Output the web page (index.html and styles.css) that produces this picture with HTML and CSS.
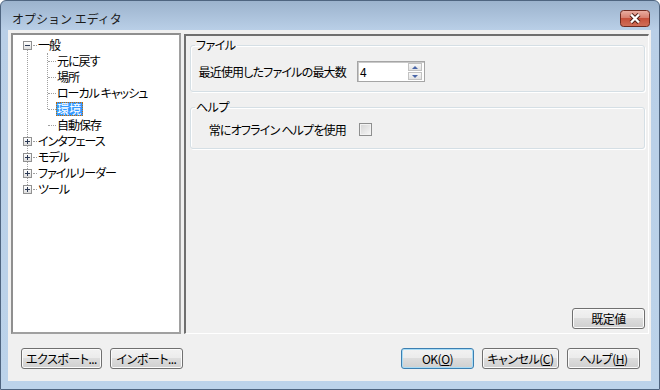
FILE: index.html
```html
<!DOCTYPE html>
<html>
<head>
    <title>オプション エディタ</title>
    <link rel="stylesheet" href="styles.css">
</head>
<body>
    <div class="window">
        <div class="titlebar">
            <span class="title">オプション エディタ</span>
            <button class="close" type="button">
                <svg width="30" height="17" viewBox="0 0 30 17">
                    <defs>
                        <linearGradient id="closeFill" x1="0" y1="0" x2="0" y2="1">
                            <stop offset="0" stop-color="#eab0a4"/>
                            <stop offset="0.45" stop-color="#d88070"/>
                            <stop offset="0.5" stop-color="#c6503b"/>
                            <stop offset="1" stop-color="#d0705a"/>
                        </linearGradient>
                    </defs>
                    <rect x="0.5" y="0.5" width="29" height="16" rx="3" fill="url(#closeFill)" stroke="#6e2b21"/>
                    <path d="M11 4.5 L19 12.5 M19 4.5 L11 12.5" stroke="#4b1d16" stroke-width="4.2"/>
                    <path d="M11 4.5 L19 12.5 M19 4.5 L11 12.5" stroke="#ffffff" stroke-width="2.4"/>
                </svg>
            </button>
        </div>

        <div class="client">
            <div class="main">
                <div class="tree">
                    <ul class="nodes">
                        <li>
                            <div class="row"><span class="toggle open"></span><span class="dots"></span><span class="label">一般</span></div>
                            <ul class="children">
                                <li class="row"><span class="dots long"></span><span class="label">元に戻す</span></li>
                                <li class="row"><span class="dots long"></span><span class="label">場所</span></li>
                                <li class="row"><span class="dots long"></span><span class="label">ローカル キャッシュ</span></li>
                                <li class="row"><span class="dots long"></span><span class="label selected">環境</span></li>
                                <li class="row"><span class="dots long"></span><span class="label">自動保存</span></li>
                            </ul>
                        </li>
                        <li class="row"><span class="toggle"></span><span class="dots"></span><span class="label">インタフェース</span></li>
                        <li class="row"><span class="toggle"></span><span class="dots"></span><span class="label">モデル</span></li>
                        <li class="row"><span class="toggle"></span><span class="dots"></span><span class="label">ファイルリーダー</span></li>
                        <li class="row"><span class="toggle"></span><span class="dots"></span><span class="label">ツール</span></li>
                    </ul>
                </div>

                <div class="panel">
                    <fieldset class="group">
                        <legend>ファイル</legend>
                        <div class="field">
                            <span class="field-label">最近使用したファイルの最大数</span>
                            <div class="spin">
                                <span class="spin-value">4</span>
                                <span class="spin-btns">
                                    <span class="spin-btn"><span class="arrow up"></span></span>
                                    <span class="spin-btn"><span class="arrow down"></span></span>
                                </span>
                            </div>
                        </div>
                    </fieldset>

                    <fieldset class="group second">
                        <legend>ヘルプ</legend>
                        <div class="field">
                            <span class="field-label">常にオフライン ヘルプを使用</span>
                            <span class="check"></span>
                        </div>
                    </fieldset>

                    <div class="panel-foot">
                        <button class="btn" type="button">既定値</button>
                    </div>
                </div>
            </div>

            <div class="footer">
                <button class="btn export" type="button">エクスポート...</button>
                <button class="btn" type="button">インポート...</button>
                <div class="footer-right">
                    <button class="btn default" type="button">OK(<u>O</u>)</button>
                    <button class="btn cancel" type="button">キャンセル(<u>C</u>)</button>
                    <button class="btn" type="button">ヘルプ(<u>H</u>)</button>
                </div>
            </div>
        </div>
    </div>
</body>
</html>
```

FILE: styles.css
```css
* {
    box-sizing: border-box;
}
body {
    margin: 0;
    font-family: "Noto Sans CJK JP", "Noto Sans CJK SC", sans-serif;
    font-size: 12px;
    font-feature-settings: "palt";
    color: #000;
}
.window {
    width: 660px;
    height: 390px;
    border: 1px solid #4f6580;
    border-radius: 6px 6px 0 0;
    background: linear-gradient(#9cb3cd, #b9cfe7 29px, #bcd3ea);
    padding: 0 8px 8px 7px;
    display: flex;
    flex-direction: column;
}
.titlebar {
    height: 29px;
    display: flex;
    align-items: flex-start;
    justify-content: space-between;
}
.title {
    margin: 10px 0 0 4px;
    line-height: 15px;
    color: #1b1b1b;
    font-feature-settings: normal;
}
.close {
    display: block;
    width: 30px;
    height: 17px;
    margin: 9px 1px 0 0;
    padding: 0;
    border: 0;
    background: none;
}
.close svg {
    display: block;
}

/* client area */
.client {
    height: 351px;
    background: #f0f0f0;
    display: flex;
    flex-direction: column;
    padding: 3px 2px 0 3px;
}
.main {
    display: flex;
    gap: 3px;
    height: 301px;
}

/* tree */
.tree {
    width: 170px;
    background: #fff;
    border: 2px solid #8f8f8f;
    border-right-color: #a0a0a0;
    border-bottom-color: #a0a0a0;
    padding-top: 2px;
    position: relative;
}
.tree::before {
    content: "";
    position: absolute;
    left: 14px;
    top: 10px;
    height: 144px;
    border-left: 1px dotted #a0a0a0;
}
.tree ul {
    list-style: none;
    margin: 0;
    padding: 0;
}
.children {
    position: relative;
}
.children::before {
    content: "";
    position: absolute;
    left: 34px;
    top: 0;
    height: 56px;
    border-left: 1px dotted #a0a0a0;
}
.row {
    height: 16px;
    display: flex;
    align-items: center;
    white-space: nowrap;
}
.toggle {
    position: relative;
    width: 9px;
    height: 9px;
    margin-left: 10px;
    border: 1px solid #919191;
    background:
        linear-gradient(#2c3a55, #2c3a55) center / 5px 1px no-repeat,
        linear-gradient(#2c3a55, #2c3a55) center / 1px 5px no-repeat,
        linear-gradient(#fff, #dedede);
}
.toggle.open {
    background:
        linear-gradient(#2c3a55, #2c3a55) center / 5px 1px no-repeat,
        linear-gradient(#fff, #dedede);
}
.dots {
    width: 4px;
    margin-left: 1px;
    border-top: 1px dotted #a0a0a0;
}
.dots.long {
    width: 8px;
    margin-left: 35px;
}
.label {
    line-height: 14px;
    padding: 0 2px 0 1px;
    letter-spacing: -1px;
}
.label.selected {
    background: #3399ff;
    color: #fff;
    outline: 1px dotted #c66a00;
    outline-offset: -1px;
    letter-spacing: 0;
}

/* right panel */
.panel {
    flex: 1;
    margin-top: 1px;
    border-style: solid;
    border-width: 2px 1px 1px 2px;
    border-color: #6f6f6f #fff #fff #6f6f6f;
    padding: 0 3px 4px 4px;
    display: flex;
    flex-direction: column;
}
.group {
    margin: 2px 0 0;
    padding: 9px 0;
    min-width: 0;
    border: 1px solid #d5dfe5;
    border-radius: 3px;
    box-shadow: 1px 1px 0 #fff, inset 1px 1px 0 #fff;
}
.group legend {
    margin-left: 4px;
    padding: 0 1px;
    line-height: 14px;
    letter-spacing: -0.5px;
}
.group.second {
    margin-top: 8px;
    padding: 5px 0 8px;
}
.field {
    display: flex;
    align-items: center;
    height: 21px;
}
.field-label {
    width: 155px;
    margin-right: 11px;
    text-align: right;
    white-space: nowrap;
    letter-spacing: -0.8px;
}
.spin {
    width: 68px;
    height: 21px;
    display: flex;
    align-items: center;
    background: #fff;
    border: 1px solid #a5a5a5;
    box-shadow: inset 1px 1px 0 #c9c9c9;
    padding: 1px 2px 1px 2px;
}
.spin-value {
    flex: 1;
    line-height: 15px;
}
.spin-btns {
    display: flex;
    flex-direction: column;
    gap: 1px;
    width: 14px;
}
.spin-btn {
    height: 8px;
    display: flex;
    align-items: center;
    justify-content: center;
    border: 1px solid #c2c2c2;
    background: linear-gradient(#f8f8f8, #e2e2e2);
}
.arrow {
    width: 0;
    height: 0;
    border-left: 3px solid transparent;
    border-right: 3px solid transparent;
}
.arrow.up {
    border-bottom: 3px solid #4a66a8;
}
.arrow.down {
    border-top: 3px solid #4a66a8;
}
.check {
    width: 13px;
    height: 13px;
    margin-left: 2px;
    border: 1px solid #8e8f8f;
    background: linear-gradient(135deg, #d4d4d4, #f7f7f7);
    box-shadow: inset 0 0 0 1px #f2f2f2;
}
.panel-foot {
    margin-top: auto;
    display: flex;
    justify-content: flex-end;
}

/* buttons */
.btn {
    width: 73px;
    height: 21px;
    padding: 0;
    font-family: inherit;
    font-size: 12px;
    font-feature-settings: "palt";
    letter-spacing: -0.5px;
    line-height: 19px;
    color: #000;
    border: 1px solid #707070;
    border-radius: 3px;
    background: linear-gradient(#f2f2f2, #ebebeb 50%, #dddddd 50%, #cfcfcf);
    box-shadow: inset 0 0 0 1px #fbfbfb;
}
.btn u {
    text-underline-offset: 1px;
}
.btn.default {
    border-color: #3c7fb1;
    box-shadow: inset 0 0 0 1px #a8dcf6;
}
.btn.export {
    width: 81px;
}
.btn.cancel {
    width: 77px;
}
.footer {
    flex: 1;
    display: flex;
    align-items: flex-start;
    gap: 8px;
    padding: 14px 9px 0 10px;
}
.footer-right {
    margin-left: auto;
    display: flex;
    gap: 8px;
}
```
